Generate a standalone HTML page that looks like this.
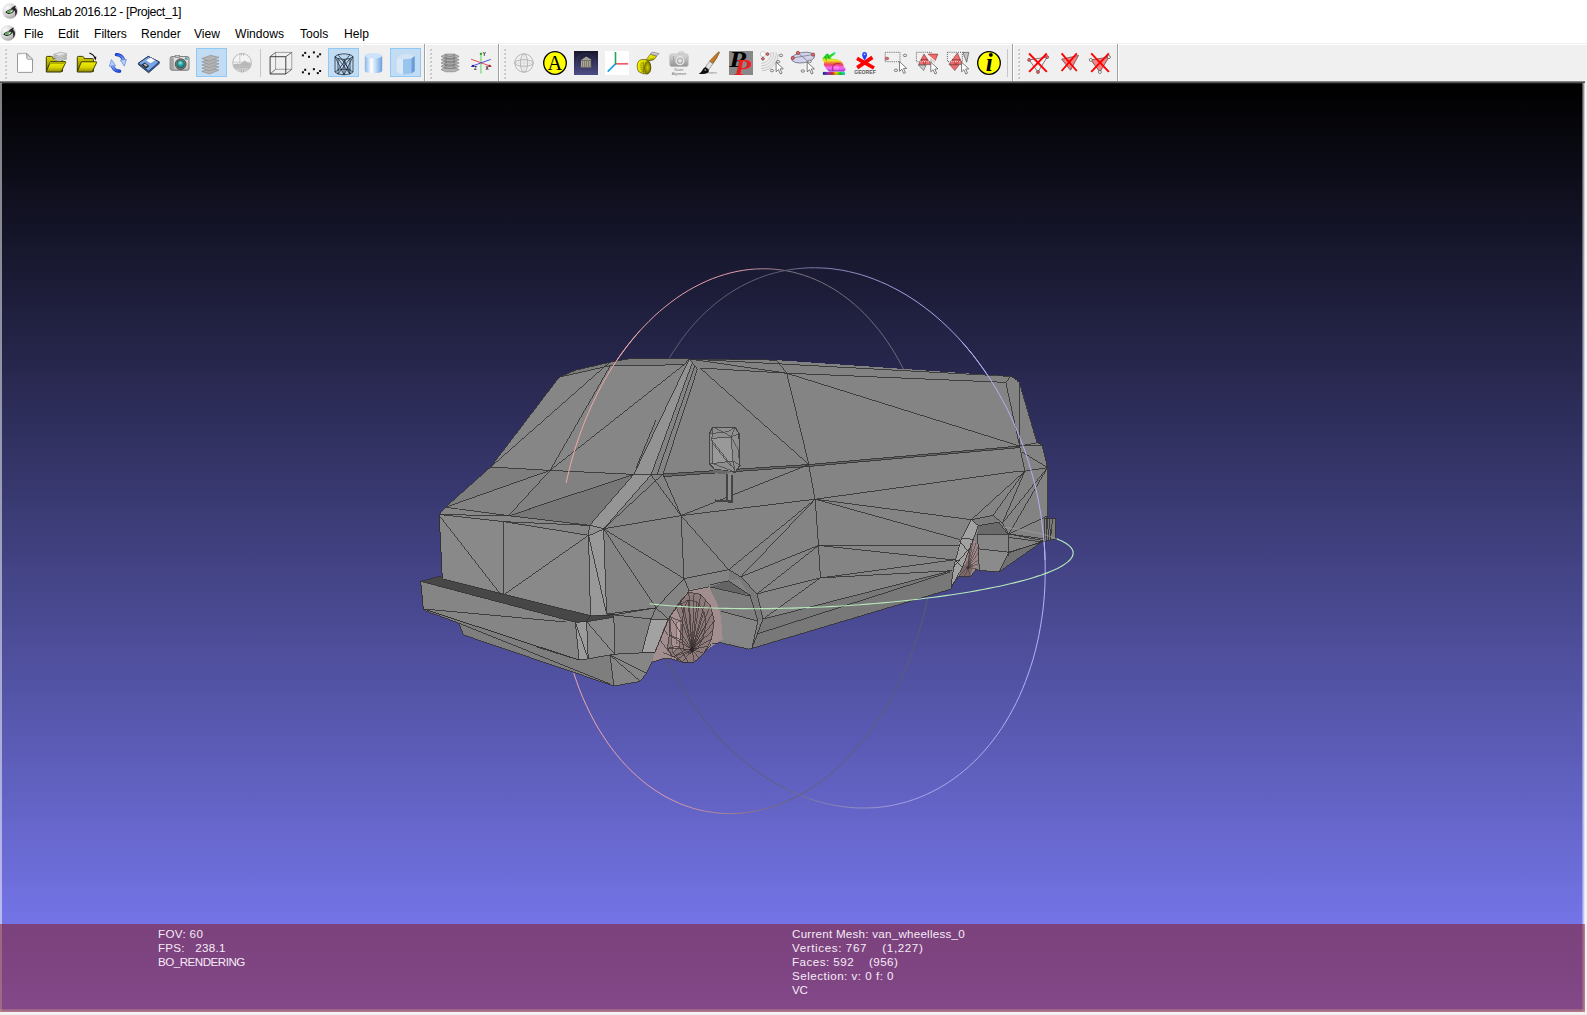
<!DOCTYPE html>
<html>
<head>
<meta charset="utf-8">
<title>MeshLab 2016.12 - [Project_1]</title>
<style>
html,body{margin:0;padding:0;}
body{width:1587px;height:1015px;overflow:hidden;background:#f0f0f0;font-family:"Liberation Sans",sans-serif;position:relative;}
#titlebar{position:absolute;left:0;top:0;width:1587px;height:24px;background:#fff;}
#title{position:absolute;left:23.1px;top:4.6px;font-size:12.4px;line-height:15px;color:#000;white-space:nowrap;letter-spacing:-0.40px;}
#menubar{position:absolute;left:0;top:24px;width:1587px;height:20px;background:#fff;}
.mi{position:absolute;top:2.5px;font-size:12.1px;line-height:15px;color:#000;white-space:nowrap;}
#toolbar{position:absolute;left:0;top:44px;width:1587px;height:37px;background:#f0f0f0;}
#tbtop{position:absolute;left:0;top:0;width:1587px;height:1px;background:#ffffff;}
#mbline{position:absolute;left:0;top:19px;width:1587px;height:1px;background:#f0f0f0;}
#view{position:absolute;left:0;top:81px;width:1585px;height:931px;background:#000;overflow:hidden;}
#grad{position:absolute;left:0;top:3px;width:1585px;height:928px;background:linear-gradient(to bottom,#000000 0%,#8080ff 100%);}
#topshade{position:absolute;left:0;top:0;width:1585px;height:3px;background:linear-gradient(to bottom,#a0a0a0,#000);}
#info{position:absolute;left:0;top:843px;width:1585px;height:88px;background:rgba(132,16,17,0.5);}
.it{position:absolute;font-size:11.6px;line-height:14px;color:#f6ecf6;white-space:pre;}
#lstrip{position:absolute;left:0;top:2px;width:2px;height:929px;background:rgba(255,255,255,0.5);}
#rstrip{position:absolute;left:1582px;top:2px;width:3px;height:929px;background:linear-gradient(to right,rgba(255,255,255,0.2),rgba(255,255,255,0.92));}
#bstrip{position:absolute;left:0;top:928px;width:1585px;height:3px;background:linear-gradient(to bottom,rgba(255,255,255,0.35),rgba(255,255,255,0.8));}
.eye{position:absolute;}
#edgeR{position:absolute;left:1585px;top:84px;width:1px;height:929px;background:#f6f6f6;}
#edgeB{position:absolute;left:0;top:1012px;width:1586px;height:1px;background:#f6f6f6;}
#scene{position:absolute;left:0;top:0;}
</style>
</head>
<body>
<div id="titlebar">
  <svg class="eye" style="left:2px;top:2.8px" width="16" height="16" viewBox="0 0 16 16"><defs><radialGradient id="eg1" cx="0.32" cy="0.3" r="0.8"><stop offset="0" stop-color="#fafafa"/><stop offset="0.55" stop-color="#d6d6d6"/><stop offset="1" stop-color="#9e9e9e"/></radialGradient></defs>
<circle cx="8" cy="8" r="7.7" fill="url(#eg1)"/>
<path d="M8.6 5.4Q11.4 3.6 13.4 2.4Q14.2 3.2 13 4.4Q15.2 6.6 15 9Q14.6 11.6 13.2 13.2Q13.8 10 12.6 7.6Q10.8 5.6 8.6 5.4Z" fill="#1a1a1a" opacity="0.92"/>
<path d="M3.4 9.2Q6.6 5 12.8 6.6Q11.2 10.8 6.6 10.9Q4.4 10.6 3.4 9.2Z" fill="#0e0e0e"/>
<path d="M4.6 9.1Q7.2 6.6 11.6 7.3Q10.4 9.9 6.8 10Q5.4 9.8 4.6 9.1Z" fill="#f4f4f4"/>
<ellipse cx="7.2" cy="8.6" rx="1.9" ry="1.3" fill="#62c462" transform="rotate(-8 7.2 8.6)"/><ellipse cx="7.0" cy="8.7" rx="0.8" ry="0.7" fill="#46a846"/>
</svg>
  <div id="title">MeshLab 2016.12 - [Project_1]</div>
</div>
<div id="menubar"><div id="mbline"></div>
<svg class="eye" style="left:0.2px;top:0.9px" width="16" height="16" viewBox="0 0 16 16"><defs><radialGradient id="eg2" cx="0.32" cy="0.3" r="0.8"><stop offset="0" stop-color="#fafafa"/><stop offset="0.55" stop-color="#d6d6d6"/><stop offset="1" stop-color="#9e9e9e"/></radialGradient></defs>
<circle cx="8" cy="8" r="7.7" fill="url(#eg2)"/>
<path d="M8.6 5.4Q11.4 3.6 13.4 2.4Q14.2 3.2 13 4.4Q15.2 6.6 15 9Q14.6 11.6 13.2 13.2Q13.8 10 12.6 7.6Q10.8 5.6 8.6 5.4Z" fill="#1a1a1a" opacity="0.92"/>
<path d="M3.4 9.2Q6.6 5 12.8 6.6Q11.2 10.8 6.6 10.9Q4.4 10.6 3.4 9.2Z" fill="#0e0e0e"/>
<path d="M4.6 9.1Q7.2 6.6 11.6 7.3Q10.4 9.9 6.8 10Q5.4 9.8 4.6 9.1Z" fill="#f4f4f4"/>
<ellipse cx="7.2" cy="8.6" rx="1.9" ry="1.3" fill="#62c462" transform="rotate(-8 7.2 8.6)"/><ellipse cx="7.0" cy="8.7" rx="0.8" ry="0.7" fill="#46a846"/>
</svg>
  <span class="mi" style="left:24px">File</span>
  <span class="mi" style="left:58px">Edit</span>
  <span class="mi" style="left:94px">Filters</span>
  <span class="mi" style="left:141px">Render</span>
  <span class="mi" style="left:194px">View</span>
  <span class="mi" style="left:235px">Windows</span>
  <span class="mi" style="left:300px">Tools</span>
  <span class="mi" style="left:344px">Help</span>
</div>
<div id="toolbar"><div id="tbtop"></div>
<style>
.ic{position:absolute;top:7px;overflow:visible}
.chk{position:absolute;top:4px;width:29px;height:27px;background:#c2dcf3;border:1px solid #90c8f6;}
.hd{position:absolute;top:4px;width:2px;height:30px;background:repeating-linear-gradient(to bottom,#c6c6c6 0px,#a2a2a2 2px,#f0f0f0 2px,#f0f0f0 4px);box-shadow:-1px -1px 0 #f8f8f8;}
.tsep{position:absolute;top:0px;width:1px;height:37px;background:#a0a0a0;box-shadow:1px 0 0 #fff;}
.sep{position:absolute;top:5px;width:1px;height:28px;background:#c6c6c6;}
</style>
<svg style="position:absolute;left:4px;top:0" width="4" height="37" viewBox="0 0 4 37"><path d="M0 5.4L2.4 3V5.4Z" fill="#fbfbfb"/><path d="M0.6 6.6L2.6 4.4V6.6Z" fill="#9a9a9a"/><path d="M0 9.4L2.4 7V9.4Z" fill="#fbfbfb"/><path d="M0.6 10.6L2.6 8.4V10.6Z" fill="#9a9a9a"/><path d="M0 13.4L2.4 11V13.4Z" fill="#fbfbfb"/><path d="M0.6 14.6L2.6 12.4V14.6Z" fill="#9a9a9a"/><path d="M0 17.4L2.4 15V17.4Z" fill="#fbfbfb"/><path d="M0.6 18.6L2.6 16.4V18.6Z" fill="#9a9a9a"/><path d="M0 21.4L2.4 19V21.4Z" fill="#fbfbfb"/><path d="M0.6 22.6L2.6 20.4V22.6Z" fill="#9a9a9a"/><path d="M0 25.4L2.4 23V25.4Z" fill="#fbfbfb"/><path d="M0.6 26.6L2.6 24.4V26.6Z" fill="#9a9a9a"/><path d="M0 29.4L2.4 27V29.4Z" fill="#fbfbfb"/><path d="M0.6 30.6L2.6 28.4V30.6Z" fill="#9a9a9a"/><path d="M0 33.4L2.4 31V33.4Z" fill="#fbfbfb"/><path d="M0.6 34.6L2.6 32.4V34.6Z" fill="#9a9a9a"/></svg>
<svg class="ic" style="left:13px" width="24" height="24" viewBox="0 0 24 24"><defs><linearGradient id="nf" x1="0" y1="0" x2="1" y2="1"><stop offset="0" stop-color="#bdbdbd"/><stop offset="1" stop-color="#fdfdfd"/></linearGradient></defs><path d="M4.5 3.2Q4.5 2.4 5.3 2.4H13.6L19.5 8.3V20.6Q19.5 21.4 18.7 21.4H5.3Q4.5 21.4 4.5 20.6Z" fill="#fff" stroke="#8c8c8c" stroke-width="0.9"/>
<path d="M13.6 2.4L19.5 8.3H15.2Q13.9 8.3 13.8 7Z" fill="url(#nf)" stroke="#8c8c8c" stroke-width="0.8" stroke-linejoin="round"/>
<path d="M5 3.4Q8 2.6 13 3" stroke="#d8d8d8" stroke-width="0.8" fill="none"/></svg>
<svg class="ic" style="left:44px" width="24" height="24" viewBox="0 0 24 24"><defs><linearGradient id="fy" x1="0" y1="0" x2="0" y2="1"><stop offset="0" stop-color="#f4f000"/><stop offset="0.55" stop-color="#d8d400"/><stop offset="1" stop-color="#8a8600"/></linearGradient><linearGradient id="fb" x1="0" y1="0" x2="0" y2="1"><stop offset="0" stop-color="#e0dc00"/><stop offset="1" stop-color="#6c6800"/></linearGradient></defs><path d="M2.3 6.3Q2.3 5.4 3.2 5.4H7.6Q8.4 5.4 8.7 6.2L9.2 7.6H17.6Q18.4 7.6 18.4 8.4V20.6H2.3Z" fill="url(#fb)" stroke="#2e2c00" stroke-width="0.9" stroke-linejoin="round"/>
<path d="M6.4 10.8H21.3Q21.9 10.8 21.6 11.5L17.4 20.4Q17.1 21 16.4 21H2.6Q2.1 21 2.4 20.4Z" fill="url(#fy)" stroke="#2e2c00" stroke-width="0.9" stroke-linejoin="round"/><g stroke="#8a8a8a" stroke-width="0.5" fill="#d6d6d6">
<path d="M9.3 8.6L16.5 6.2L23 7.8L15.6 10.4Z"/><path d="M9.3 6.9L16.5 4.5L23 6.1L15.6 8.7Z"/><path d="M9.3 5.2L16.5 2.8L23 4.4L15.6 7Z"/><path d="M9.3 3.5L16.5 1.1L23 2.7L15.6 5.3Z" fill="#e4e4e4"/></g>
<path d="M6.4 10.8H21.3Q21.9 10.8 21.6 11.5L20.9 13H5.4Z" fill="url(#fy)" stroke="none"/><path d="M6.4 10.8H21.3Q21.9 10.8 21.6 11.5" fill="none" stroke="#2e2c00" stroke-width="0.9"/></svg>
<svg class="ic" style="left:75px" width="24" height="24" viewBox="0 0 24 24"><defs><linearGradient id="fy" x1="0" y1="0" x2="0" y2="1"><stop offset="0" stop-color="#f4f000"/><stop offset="0.55" stop-color="#d8d400"/><stop offset="1" stop-color="#8a8600"/></linearGradient><linearGradient id="fb" x1="0" y1="0" x2="0" y2="1"><stop offset="0" stop-color="#e0dc00"/><stop offset="1" stop-color="#6c6800"/></linearGradient></defs><path d="M2.3 6.3Q2.3 5.4 3.2 5.4H7.6Q8.4 5.4 8.7 6.2L9.2 7.6H17.6Q18.4 7.6 18.4 8.4V20.6H2.3Z" fill="url(#fb)" stroke="#2e2c00" stroke-width="0.9" stroke-linejoin="round"/>
<path d="M6.4 10.8H21.3Q21.9 10.8 21.6 11.5L17.4 20.4Q17.1 21 16.4 21H2.6Q2.1 21 2.4 20.4Z" fill="url(#fy)" stroke="#2e2c00" stroke-width="0.9" stroke-linejoin="round"/><path d="M14.4 1.9Q19 3.6 20.2 7.4" fill="none" stroke="#111" stroke-width="1.1"/><path d="M18.6 6.2L21.3 5.6L20.9 9.4Z" fill="#111"/></svg>
<svg class="ic" style="left:106px" width="24" height="24" viewBox="0 0 24 24"><defs><linearGradient id="ra" x1="0" y1="0" x2="1" y2="1"><stop offset="0" stop-color="#1c4ce0"/><stop offset="1" stop-color="#86aef4"/></linearGradient><linearGradient id="rb" x1="1" y1="1" x2="0" y2="0"><stop offset="0" stop-color="#1c4ce0"/><stop offset="1" stop-color="#86aef4"/></linearGradient></defs><path d="M10.4 3.6Q16 3.8 17.8 9.4" fill="none" stroke="#0c2ca8" stroke-width="3.3" stroke-linecap="round"/><path d="M10.4 3.6Q16 3.8 17.8 9.4" fill="none" stroke="url(#ra)" stroke-width="2.1" stroke-linecap="round"/>
<path d="M14.4 9.2L20.4 8.4L18.4 15.2Z" fill="#b4d0fa" stroke="#5c84d8" stroke-width="0.7" stroke-linejoin="round"/>
<path d="M13.6 20.2Q8 20 6.2 14.4" fill="none" stroke="#0c2ca8" stroke-width="3.3" stroke-linecap="round"/><path d="M13.6 20.2Q8 20 6.2 14.4" fill="none" stroke="url(#rb)" stroke-width="2.1" stroke-linecap="round"/>
<path d="M9.6 14.6L3.4 15.4L5.4 8.6Z" fill="#b4d0fa" stroke="#5c84d8" stroke-width="0.7" stroke-linejoin="round"/></svg>
<svg class="ic" style="left:137px" width="24" height="24" viewBox="0 0 24 24"><path d="M1.4 12.2L11.2 5.4L22.2 10.9V12.6L11.6 21.8L1.4 13.6Z" fill="#3c66a8" stroke="#1c2c48" stroke-width="0.8" stroke-linejoin="round"/>
<path d="M1.4 12.2L11.2 5.4L22.2 10.9L11.6 20.2Z" fill="#78a8ea" stroke="#1c2c48" stroke-width="0.8" stroke-linejoin="round"/>
<path d="M8.6 9.2L13.6 6.4L18.6 9.6L13.4 12.6Z" fill="#fff" stroke="#5a7cb0" stroke-width="0.4"/>
<path d="M4.4 13.6L8 11.6L12.2 15L8.8 17.8Z" fill="#2a2a2a"/>
<path d="M6.4 13.6L8.2 12.6L10.6 14.6L8.9 15.8Z" fill="#b8b8b8"/></svg>
<svg class="ic" style="left:168px" width="24" height="24" viewBox="0 0 24 24"><defs><linearGradient id="cb" x1="0" y1="0" x2="0" y2="1"><stop offset="0" stop-color="#ececec"/><stop offset="1" stop-color="#bcbcbc"/></linearGradient><radialGradient id="cl" cx="0.45" cy="0.35" r="0.7"><stop offset="0" stop-color="#9ce4e0"/><stop offset="0.5" stop-color="#1ea6a2"/><stop offset="1" stop-color="#0a6a68"/></radialGradient></defs><rect x="2.2" y="5.6" width="18.8" height="13.6" rx="1.6" fill="url(#cb)" stroke="#5a5a5a" stroke-width="0.8"/>
<rect x="2.6" y="6.2" width="3.2" height="12.6" rx="1" fill="#a2a2a2"/>
<rect x="7.2" y="4.6" width="4.6" height="1.8" fill="#c4c4c4" stroke="#6e6e6e" stroke-width="0.6"/>
<rect x="17" y="6.8" width="2.8" height="1.6" fill="#38b4b4" stroke="#6e6e6e" stroke-width="0.4"/>
<circle cx="12.7" cy="13.1" r="5.4" fill="#7a7a7a" stroke="#3c3c3c" stroke-width="0.7"/>
<circle cx="12.7" cy="13.1" r="3.8" fill="url(#cl)" stroke="#3a4a4a" stroke-width="0.5"/></svg>
<div class="chk" style="left:196px"></div>
<svg class="ic" style="left:199px" width="24" height="24" viewBox="0 0 24 24"><g fill="#b4b4b4" stroke="#848484" stroke-width="0.55" stroke-linejoin="round"><path d="M2.8 20.4L11.6 17.1L20 19.1L10.4 23.0Z"/><path d="M2.8 17.2L11.6 13.9L20 15.9L10.4 19.8Z"/><path d="M2.8 14.0L11.6 10.7L20 12.7L10.4 16.6Z"/><path d="M2.8 10.8L11.6 7.5L20 9.5L10.4 13.4Z"/><path d="M2.8 7.6L11.6 4.3L20 6.3L10.4 10.2Z"/></g></svg>
<svg class="ic" style="left:230px" width="24" height="24" viewBox="0 0 24 24"><circle cx="12.1" cy="11.8" r="9.3" fill="#f4f4f4" stroke="#b4b4b4" stroke-width="0.9"/>
<path d="M3.2 13.6L7.4 12.4L9.8 13.2L14.6 9.6L17.6 11.6L21 12.6Q21.2 16 19.4 17.8H4.6Q3.2 15.8 3.2 13.6Z" fill="#b8b8b8"/>
<path d="M4.6 17.8H19.4Q17.6 20 14.8 20.8H9.2Q6.2 20 4.6 17.8Z" fill="#d4d4d4"/>
<path d="M9.8 2.8V21M3 11.2H21.2M4 15.6H20.4M5.6 18.6H18.8" stroke="#c2c2c2" stroke-width="0.7" fill="none"/>
<path d="M11.4 2.6V4.6M13.6 2.8V4.6M11.4 19.2V21M13.6 19V20.8" stroke="#8a8a8a" stroke-width="0.6"/></svg>
<div class="sep" style="left:260px"></div>
<svg class="ic" style="left:269px" width="24" height="24" viewBox="0 0 24 24"><path d="M6.6 1.4H22.8V18.3H6.6Z" fill="none" stroke="#8a8a8a" stroke-width="0.8"/>
<path d="M1.1 5.7L6.6 1.4M16.8 5.7L22.8 1.4M16.8 23L22.8 18.3M1.1 23L6.6 18.3" stroke="#4a4a4a" stroke-width="0.8"/>
<path d="M1.1 5.7H16.8V23H1.1Z" fill="none" stroke="#2e2e2e" stroke-width="0.9"/></svg>
<svg class="ic" style="left:300px" width="24" height="24" viewBox="0 0 24 24"><rect x="1.9" y="3.4" width="2" height="2" fill="#0a0a0a"/><rect x="4.2" y="0.9" width="2" height="2" fill="#0a0a0a"/><rect x="8.0" y="4.8" width="2" height="2" fill="#0a0a0a"/><rect x="12.9" y="0.4" width="2" height="2" fill="#0a0a0a"/><rect x="16.8" y="4.5" width="2" height="2" fill="#0a0a0a"/><rect x="19.1" y="2.3" width="2" height="2" fill="#0a0a0a"/><rect x="1.9" y="20.3" width="2" height="2" fill="#0a0a0a"/><rect x="4.2" y="17.8" width="2" height="2" fill="#0a0a0a"/><rect x="8.0" y="21.7" width="2" height="2" fill="#0a0a0a"/><rect x="12.9" y="17.2" width="2" height="2" fill="#0a0a0a"/><rect x="16.8" y="21.1" width="2" height="2" fill="#0a0a0a"/><rect x="19.1" y="19.0" width="2" height="2" fill="#0a0a0a"/></svg>
<div class="chk" style="left:328px"></div>
<svg class="ic" style="left:331px" width="24" height="24" viewBox="0 0 24 24"><path d="M4 5.6V21Q4 23.6 13 23.8Q22 23.6 22 21V5.6Q22 3 13 2.8Q4 3 4 5.6Z" fill="#b4d2ee" fill-opacity="0.55"/>
<g fill="none" stroke="#0e1822" stroke-width="0.68" stroke-linejoin="round">
<path d="M4 5.6L7 3.6L13 2.8L19 3.6L22 5.6L19 7.6L13 8.4L7 7.6Z"/>
<path d="M4 21L7 19L13 18.2L19 19L22 21L19 23L13 23.8L7 23Z"/>
<path d="M4 5.6V21M22 5.6V21M7 7.6V23M19 7.6V23M13 8.4V23.8"/>
<path d="M4 5.6L13 23.8M13 8.4L19 23M7 7.6L19 23M19 7.6L7 23M22 5.6L13 23.8M7 3.6L19 19M19 3.6L7 19"/></g></svg>
<svg class="ic" style="left:362px" width="24" height="24" viewBox="0 0 24 24"><defs><linearGradient id="sg" x1="0" y1="0" x2="1" y2="0"><stop offset="0" stop-color="#86b6ea"/><stop offset="0.38" stop-color="#ffffff"/><stop offset="0.78" stop-color="#9cc4ee"/><stop offset="1" stop-color="#6a9edc"/></linearGradient></defs><path d="M2.8 4.8V19.4Q2.8 22 11.5 22.1Q20.2 22 20.2 19.4V4.8Z" fill="url(#sg)"/>
<ellipse cx="11.5" cy="4.8" rx="8.7" ry="2.8" fill="#cfe3f8"/></svg>
<div class="chk" style="left:390px"></div>
<svg class="ic" style="left:393px" width="24" height="24" viewBox="0 0 24 24"><path d="M3.7 7L8 3.6L16 2.8L21.8 5L18.4 7.6L10 8.6Z" fill="#d2e3f5"/>
<path d="M3.7 7L10 8.6V23.6L3.7 21Z" fill="#dce8f6"/>
<path d="M10 8.6L18.4 7.6V22.6L10 23.6Z" fill="#98c4f0"/>
<path d="M18.4 7.6L21.8 5V20L18.4 22.6Z" fill="#6a9cd8"/></svg>
<div class="tsep" style="left:424px"></div>
<svg style="position:absolute;left:429px;top:0" width="4" height="37" viewBox="0 0 4 37"><path d="M0 5.4L2.4 3V5.4Z" fill="#fbfbfb"/><path d="M0.6 6.6L2.6 4.4V6.6Z" fill="#9a9a9a"/><path d="M0 9.4L2.4 7V9.4Z" fill="#fbfbfb"/><path d="M0.6 10.6L2.6 8.4V10.6Z" fill="#9a9a9a"/><path d="M0 13.4L2.4 11V13.4Z" fill="#fbfbfb"/><path d="M0.6 14.6L2.6 12.4V14.6Z" fill="#9a9a9a"/><path d="M0 17.4L2.4 15V17.4Z" fill="#fbfbfb"/><path d="M0.6 18.6L2.6 16.4V18.6Z" fill="#9a9a9a"/><path d="M0 21.4L2.4 19V21.4Z" fill="#fbfbfb"/><path d="M0.6 22.6L2.6 20.4V22.6Z" fill="#9a9a9a"/><path d="M0 25.4L2.4 23V25.4Z" fill="#fbfbfb"/><path d="M0.6 26.6L2.6 24.4V26.6Z" fill="#9a9a9a"/><path d="M0 29.4L2.4 27V29.4Z" fill="#fbfbfb"/><path d="M0.6 30.6L2.6 28.4V30.6Z" fill="#9a9a9a"/><path d="M0 33.4L2.4 31V33.4Z" fill="#fbfbfb"/><path d="M0.6 34.6L2.6 32.4V34.6Z" fill="#9a9a9a"/></svg>
<svg class="ic" style="left:438px" width="24" height="24" viewBox="0 0 24 24"><g fill="#b2b2b2" stroke="#767676" stroke-width="0.55" stroke-linejoin="round"><path d="M3 18.6L7.6 16.2L16.6 16.2L21.2 18.6L16.6 20.8L7.6 20.8Z"/><path d="M3 15.3L7.6 12.9L16.6 12.9L21.2 15.3L16.6 17.5L7.6 17.5Z"/><path d="M3 12.0L7.6 9.6L16.6 9.6L21.2 12.0L16.6 14.2L7.6 14.2Z"/><path d="M3 8.7L7.6 6.3L16.6 6.3L21.2 8.7L16.6 10.9L7.6 10.9Z"/><path d="M3 5.4L7.6 3.0L16.6 3.0L21.2 5.4L16.6 7.6L7.6 7.6Z"/></g><g fill="none" stroke="#6a6a6a" stroke-width="0.5"><path d="M7 4.4Q12 6.8 17 4.4M6 6.2Q12 9 18 6.2M7 7.7Q12 10.1 17 7.7M6 9.5Q12 12.3 18 9.5M7 11Q12 13.4 17 11M6 12.8Q12 15.6 18 12.8M7 14.3Q12 16.7 17 14.3M6 16.1Q12 18.9 18 16.1M8 3.2V17M16 3.2V17"/></g></svg>
<svg class="ic" style="left:469px" width="24" height="24" viewBox="0 0 24 24"><path d="M11.9 2V22.6" stroke="#9fdf9f" stroke-width="1.9"/><rect x="10.9" y="1.8" width="2" height="2" fill="#12a812"/>
<path d="M2 8.2L22.2 15.4" stroke="#e63c3c" stroke-width="0.9"/><path d="M22.6 15.6L19.4 15.9L20.4 13.4Z" fill="#b00000"/>
<path d="M21.8 8.4L2.4 15.4" stroke="#4040e4" stroke-width="0.9"/><path d="M2 15.6L5.2 15.9L4.2 13.4Z" fill="#0000b0"/>
<g font-family="Liberation Sans,sans-serif" font-weight="bold" font-size="4.6" fill="#111"><text x="13.8" y="5.2">Y</text><text x="5" y="19.4">Z</text><text x="16.6" y="19.4">X</text></g></svg>
<div class="tsep" style="left:498px"></div>
<svg style="position:absolute;left:503px;top:0" width="4" height="37" viewBox="0 0 4 37"><path d="M0 5.4L2.4 3V5.4Z" fill="#fbfbfb"/><path d="M0.6 6.6L2.6 4.4V6.6Z" fill="#9a9a9a"/><path d="M0 9.4L2.4 7V9.4Z" fill="#fbfbfb"/><path d="M0.6 10.6L2.6 8.4V10.6Z" fill="#9a9a9a"/><path d="M0 13.4L2.4 11V13.4Z" fill="#fbfbfb"/><path d="M0.6 14.6L2.6 12.4V14.6Z" fill="#9a9a9a"/><path d="M0 17.4L2.4 15V17.4Z" fill="#fbfbfb"/><path d="M0.6 18.6L2.6 16.4V18.6Z" fill="#9a9a9a"/><path d="M0 21.4L2.4 19V21.4Z" fill="#fbfbfb"/><path d="M0.6 22.6L2.6 20.4V22.6Z" fill="#9a9a9a"/><path d="M0 25.4L2.4 23V25.4Z" fill="#fbfbfb"/><path d="M0.6 26.6L2.6 24.4V26.6Z" fill="#9a9a9a"/><path d="M0 29.4L2.4 27V29.4Z" fill="#fbfbfb"/><path d="M0.6 30.6L2.6 28.4V30.6Z" fill="#9a9a9a"/><path d="M0 33.4L2.4 31V33.4Z" fill="#fbfbfb"/><path d="M0.6 34.6L2.6 32.4V34.6Z" fill="#9a9a9a"/></svg>
<svg class="ic" style="left:512px" width="24" height="24" viewBox="0 0 24 24"><g fill="none" stroke="#aeaeae" stroke-width="0.9"><circle cx="12" cy="12" r="9.2"/><ellipse cx="12" cy="12" rx="3.5" ry="9.2"/><ellipse cx="12" cy="12" rx="9.2" ry="3.3"/><path d="M12 2.8V21.2M2.8 12H21.2" stroke="#cfcfcf" stroke-width="0.6"/></g></svg>
<svg class="ic" style="left:543px" width="24" height="24" viewBox="0 0 24 24"><circle cx="12" cy="12" r="11.3" fill="#ffff00" stroke="#000" stroke-width="1.3"/><text x="12" y="19" text-anchor="middle" font-family="Liberation Serif,serif" font-size="20.5" fill="#000">A</text></svg>
<svg class="ic" style="left:574px" width="24" height="24" viewBox="0 0 24 24"><defs><linearGradient id="mg" x1="0" y1="0" x2="0" y2="1"><stop offset="0" stop-color="#17152c"/><stop offset="1" stop-color="#4e4e88"/></linearGradient></defs><rect x="0" y="0" width="24" height="24" fill="url(#mg)"/><circle cx="12" cy="12" r="9.5" fill="none" stroke="#5a5a8c" stroke-width="0.4" opacity="0.6"/>
<path d="M6.8 9.2L12.2 5.6L17.2 8.4V9.6H6.8Z" fill="#a49f90"/><rect x="6.9" y="9.6" width="10.2" height="6.4" fill="#7c786e"/>
<path d="M7.6 9.8V16M9.6 9.8V16M11.6 9.8V16M13.6 9.8V16M15.8 9.8V16" stroke="#b2ad9c" stroke-width="1.0"/><rect x="6.6" y="15.6" width="10.8" height="0.9" fill="#8e8a7a"/></svg>
<svg class="ic" style="left:605px" width="24" height="24" viewBox="0 0 24 24"><rect x="0" y="0" width="24" height="24" fill="#fff"/><path d="M10.5 12.8L2.7 20.7" stroke="#18a2ea" stroke-width="1.7"/><path d="M10.5 12.8H23.2" stroke="#f25a66" stroke-width="1.7"/><path d="M10.5 1V13.6" stroke="#22a45c" stroke-width="1.6"/></svg>
<svg class="ic" style="left:636px" width="24" height="24" viewBox="0 0 24 24"><defs><linearGradient id="tg" x1="0" y1="0" x2="1" y2="0.4"><stop offset="0" stop-color="#fcf800"/><stop offset="0.5" stop-color="#e2de00"/><stop offset="1" stop-color="#8c8800"/></linearGradient><radialGradient id="ts" cx="0.5" cy="0.5" r="0.6"><stop offset="0" stop-color="#d2ce00"/><stop offset="1" stop-color="#6a6600"/></radialGradient><linearGradient id="tt" x1="0" y1="0" x2="0.3" y2="1"><stop offset="0" stop-color="#fcf800"/><stop offset="0.6" stop-color="#e0dc00"/><stop offset="1" stop-color="#6a6600"/></linearGradient></defs><path d="M9.6 9Q11.6 7.2 12.6 5.4L14.3 3.2L20.6 5Q19.2 7.6 17.9 8.6Q15 9.8 11.4 10.4Z" fill="url(#tt)" stroke="#3a3800" stroke-width="0.5" stroke-linejoin="round"/>
<path d="M14.3 3.2L16.1 1.1L22.9 2.6L20.6 5Z" fill="#e4e4e4" stroke="#5a5a5a" stroke-width="0.6" stroke-linejoin="round"/><path d="M15.4 2.6L21.6 4" stroke="#8a8a8a" stroke-width="0.5"/>
<path d="M1.2 15Q1.2 9.2 6 8.5Q10 8 12.2 9.8Q15 12 14.9 17Q14.6 22 11.4 23Q6 23.4 2.6 20.6Q1.2 18.6 1.2 15Z" fill="url(#tg)" stroke="#3a3800" stroke-width="0.6"/>
<ellipse cx="11.5" cy="16.6" rx="3.1" ry="6.1" fill="url(#ts)" stroke="#4a4800" stroke-width="0.4"/>
<path d="M4.6 12.2L7 11.8M3.8 14.2L6.6 14M4.2 16.2L7 16.2M4.6 18.2L7.2 18.4M5.6 20.2L7.6 20.6M7.6 10.8V22" stroke="#5a5600" stroke-width="0.6" fill="none"/></svg>
<svg class="ic" style="left:667px" width="24" height="24" viewBox="0 0 24 24"><defs><linearGradient id="rg" x1="0" y1="0" x2="0" y2="1"><stop offset="0" stop-color="#dcdcdc"/><stop offset="1" stop-color="#929292"/></linearGradient></defs><rect x="11.6" y="0.8" width="5.2" height="3" rx="0.8" fill="#dcdcdc" stroke="#b4b4b4" stroke-width="0.5"/>
<rect x="2.8" y="3" width="18.4" height="12.6" rx="2" fill="url(#rg)" stroke="#b0b0b0" stroke-width="0.6"/>
<path d="M6.5 5V14" stroke="#9a9a9a" stroke-width="0.7"/><circle cx="13" cy="9.8" r="3.9" fill="#b4b4b4" stroke="#ececec" stroke-width="1.1"/><circle cx="13" cy="9.8" r="1.8" fill="#e6e6e6"/>
<g font-family="Liberation Sans,sans-serif" font-size="3.7" fill="#6e6e6e" text-anchor="middle"><text x="12" y="19.5" textLength="9" lengthAdjust="spacingAndGlyphs">Raster</text><text x="12" y="23.5" textLength="14.6" lengthAdjust="spacingAndGlyphs">Alignment</text></g></svg>
<svg class="ic" style="left:698px" width="24" height="24" viewBox="0 0 24 24"><defs><linearGradient id="bh" x1="0" y1="0" x2="1" y2="1"><stop offset="0" stop-color="#e89a38"/><stop offset="1" stop-color="#a85c0c"/></linearGradient></defs><ellipse cx="14" cy="21.8" rx="5.4" ry="0.9" fill="#8c8c8c" opacity="0.55"/>
<path d="M20.8 0.8Q16 5 11.6 10.2L14.8 12.8Q19.4 6.8 21.5 1.3Z" fill="url(#bh)" stroke="#5a3408" stroke-width="0.6" stroke-linejoin="round"/>
<path d="M11.6 10.2L7.4 16L10.8 18.8L14.8 12.8Z" fill="#e2e2e2" stroke="#6e6e6e" stroke-width="0.6"/>
<path d="M7.4 16Q5 17.2 4.2 19.6Q3.2 21.6 0.8 22.7Q6.6 23.6 9.8 21.8Q11.2 20.6 10.8 18.8Z" fill="#0c0c0c"/><circle cx="7.4" cy="19" r="1" fill="#8a8a8a"/></svg>
<svg class="ic" style="left:729px" width="24" height="24" viewBox="0 0 24 24"><rect x="0" y="0" width="24" height="24" fill="#888888"/><g font-family="Liberation Serif,serif" font-weight="bold" font-style="italic" font-size="23.4"><text transform="translate(0.2 15.8) scale(1.17 1)" fill="#000">P</text><text transform="translate(5.3 23.8) scale(1.17 1)" fill="#ee1c1c">P</text></g></svg>
<svg class="ic" style="left:760px" width="24" height="24" viewBox="0 0 24 24"><g fill="none" stroke="#b4b4b4" stroke-width="0.7"><path d="M11 1.2A10 10 0 0 1 1.4 12.4"/><path d="M13.6 1.2A12.6 12.6 0 0 1 1.2 15"/><path d="M16.2 1.4A15.4 15.4 0 0 1 1.2 17.6"/><path d="M18.4 3A17.6 17.6 0 0 1 2 19.8"/></g>
<circle cx="2.9" cy="3.2" r="2.6" fill="#fff" stroke="#b0b0b0" stroke-width="0.6"/><circle cx="7.5" cy="3.1" r="1.4" fill="#f26464" stroke="#6a2a2a" stroke-width="0.6"/><circle cx="2.9" cy="7.8" r="1.4" fill="#f26464" stroke="#6a2a2a" stroke-width="0.6"/><ellipse cx="21.0" cy="4.4" rx="1.7" ry="1.25" fill="#e8e8e8" stroke="#5a5a5a" stroke-width="0.7"/><ellipse cx="18.1" cy="10.7" rx="1.7" ry="1.25" fill="#e8e8e8" stroke="#5a5a5a" stroke-width="0.7"/><ellipse cx="11.9" cy="19.6" rx="1.7" ry="1.25" fill="#e8e8e8" stroke="#5a5a5a" stroke-width="0.7"/><path d="M16.1 11.1v9.6l2.3-2.1l1.9 4.3l1.7-0.8l-1.9-4.2l3.2-0.1Z" fill="#fff" stroke="#4a4a4a" stroke-width="0.7" stroke-linejoin="round"/></svg>
<svg class="ic" style="left:791px" width="24" height="24" viewBox="0 0 24 24"><ellipse cx="12" cy="6.6" rx="11.6" ry="5.2" transform="rotate(-8 12 6.6)" fill="#d2d2ea" stroke="#5c5c74" stroke-width="0.7"/>
<path d="M1.8 6.9L22.1 3.6M6.9 1.9L17 10.4" stroke="#5c5c74" stroke-width="0.6"/><circle cx="6.9" cy="1.9" r="1.6" fill="#f26464" stroke="#6a2a2a" stroke-width="0.6"/><circle cx="22.1" cy="3.6" r="1.6" fill="#f26464" stroke="#6a2a2a" stroke-width="0.6"/><circle cx="1.8" cy="6.9" r="1.6" fill="#f26464" stroke="#6a2a2a" stroke-width="0.6"/><ellipse cx="18.7" cy="10.3" rx="1.7" ry="1.25" fill="#e8e8e8" stroke="#5a5a5a" stroke-width="0.7"/><ellipse cx="11.8" cy="20.0" rx="1.7" ry="1.25" fill="#e8e8e8" stroke="#5a5a5a" stroke-width="0.7"/><path d="M16.2 11.2v9.6l2.3-2.1l1.9 4.3l1.7-0.8l-1.9-4.2l3.2-0.1Z" fill="#fff" stroke="#4a4a4a" stroke-width="0.7" stroke-linejoin="round"/></svg>
<svg class="ic" style="left:822px" width="24" height="24" viewBox="0 0 24 24"><defs><linearGradient id="bb" x1="0" y1="0" x2="1" y2="0"><stop offset="0" stop-color="#1030a8"/><stop offset="0.25" stop-color="#a830c8"/><stop offset="0.42" stop-color="#e42020"/><stop offset="0.6" stop-color="#f0e000"/><stop offset="0.78" stop-color="#20d420"/><stop offset="0.96" stop-color="#00f0c4"/></linearGradient><linearGradient id="bn" gradientUnits="userSpaceOnUse" x1="0" y1="1" x2="0" y2="20.4"><stop offset="0" stop-color="#20f0e8"/><stop offset="0.12" stop-color="#20e030"/><stop offset="0.3" stop-color="#38d818"/><stop offset="0.42" stop-color="#f4f030"/><stop offset="0.56" stop-color="#f08030"/><stop offset="0.66" stop-color="#ee4070"/><stop offset="0.8" stop-color="#f468ee"/><stop offset="0.93" stop-color="#d050e8"/><stop offset="1" stop-color="#7828b8"/></linearGradient></defs><rect x="0.9" y="20.9" width="22" height="2.9" fill="url(#bb)"/><rect x="0.9" y="22.6" width="22" height="1.2" fill="#000" opacity="0.28"/>
<path d="M12.9 1Q14 1.6 13.2 3L8.6 6.6Q9 7.6 10 8Q13 7.6 15.1 8.2Q18.6 9 20.1 11.2Q21.6 13.4 21.7 15.9Q23.4 16.6 23.6 17.9Q23.6 19.4 22 20.4L7 20.4Q4.4 18.6 3.4 16.6Q2 14.6 1.9 13.4Q1.8 11.8 2.4 10.8L0.6 10Q-0.2 9.2 0.4 8.2Q1.4 5.4 3 4.4Q4 2.6 5.4 2.4Q6.6 2.6 7.1 4.6L11.4 1.4Q12.2 0.8 12.9 1Z" fill="url(#bn)"/>
<path d="M10.6 19.8Q9.4 15.4 12.2 13.2Q15 11.6 18.6 12.8" stroke="#8a1030" stroke-width="0.8" fill="none" opacity="0.75"/>
<path d="M5.2 2.8Q6.6 5 7.2 7.6M3.2 5.2Q4.6 7.6 4.2 10" stroke="#0a6a0a" stroke-width="0.7" fill="none" opacity="0.7"/>
<ellipse cx="14.6" cy="16.6" rx="2.6" ry="2.2" fill="#fa90fa" opacity="0.6"/></svg>
<svg class="ic" style="left:853px" width="24" height="24" viewBox="0 0 24 24"><path d="M4 7.4L21 17M19.4 6.4L4.2 16.6" stroke="#ff0000" stroke-width="3.7"/>
<path d="M11.6 9.4Q9 5.4 9.2 3.4A2.4 2.4 0 0 1 14 3.4Q14.2 5.4 11.6 9.4Z" fill="#2040ff"/><circle cx="11.6" cy="3.3" r="0.9" fill="#c8d4ff"/>
<text x="12" y="23.2" text-anchor="middle" font-family="Liberation Sans,sans-serif" font-size="5.6" font-weight="bold" fill="#5a5a5a" textLength="21.6" lengthAdjust="spacingAndGlyphs">GEOREF</text></svg>
<svg class="ic" style="left:884px" width="24" height="24" viewBox="0 0 24 24"><rect x="1.2" y="1.3" width="14.8" height="9.4" fill="none" stroke="#3a3a3a" stroke-width="0.8" stroke-dasharray="1 1.1"/><ellipse cx="2.9" cy="7.5" rx="1.8" ry="1.3" fill="#f26464" stroke="#6a2a2a" stroke-width="0.5"/><ellipse cx="21.0" cy="4.4" rx="1.7" ry="1.25" fill="#e8e8e8" stroke="#5a5a5a" stroke-width="0.7"/><ellipse cx="11.9" cy="19.3" rx="1.7" ry="1.25" fill="#e8e8e8" stroke="#5a5a5a" stroke-width="0.7"/><path d="M15.5 10.7v9.6l2.3-2.1l1.9 4.3l1.7-0.8l-1.9-4.2l3.2-0.1Z" fill="#fff" stroke="#4a4a4a" stroke-width="0.7" stroke-linejoin="round"/></svg>
<svg class="ic" style="left:915px" width="24" height="24" viewBox="0 0 24 24"><rect x="1.4" y="1.3" width="14.8" height="9.4" fill="none" stroke="#3a3a3a" stroke-width="0.8" stroke-dasharray="1 1.1"/><path d="M3.5 14.1H11.1L8.6 19.6Z" fill="#c8c8c8" stroke="#3a3a3a" stroke-width="0.5"/>
<g fill="#f26a6a" stroke="#5a2020" stroke-width="0.5" stroke-linejoin="round"><path d="M3.5 13.6L9 3.1L16 13.6Z"/><path d="M12.8 3.1H22.9L19.6 11.2Z"/></g>
<path d="M6.2 8.4H12.4M6.2 8.4L9.6 13.6L12.4 8.4" stroke="#5a2020" stroke-width="0.5" fill="none"/>
<path d="M10.4 2L21.3 11.4" stroke="#f4f4f4" stroke-width="1.3"/><path d="M4.8 10.7H15.4" stroke="#fff" stroke-width="0.8" stroke-dasharray="1 1.1"/><path d="M15.8 11.2v9.6l2.3-2.1l1.9 4.3l1.7-0.8l-1.9-4.2l3.2-0.1Z" fill="#fff" stroke="#4a4a4a" stroke-width="0.7" stroke-linejoin="round"/></svg>
<svg class="ic" style="left:946px" width="24" height="24" viewBox="0 0 24 24"><rect x="1.4" y="1.3" width="15.0" height="9.4" fill="none" stroke="#3a3a3a" stroke-width="0.8" stroke-dasharray="1 1.1"/><path d="M16.9 1.4H22.8L20.7 11.2Z" fill="#c4c4c4" stroke="#3a3a3a" stroke-width="0.6"/>
<g fill="#f26a6a" stroke="#5a2020" stroke-width="0.5" stroke-linejoin="round"><path d="M2.9 13.4L11.4 1.9L16.4 13.4Z"/><path d="M3.8 13.8H13.1L8.8 19.6Z"/></g>
<path d="M6.4 8.6H14.2M6.4 8.6L9.8 13.4L14.2 8.6" stroke="#5a2020" stroke-width="0.5" fill="none"/><path d="M4.8 10.7H15.4" stroke="#fff" stroke-width="0.8" stroke-dasharray="1 1.1"/><path d="M15.6 11.2v9.6l2.3-2.1l1.9 4.3l1.7-0.8l-1.9-4.2l3.2-0.1Z" fill="#fff" stroke="#4a4a4a" stroke-width="0.7" stroke-linejoin="round"/></svg>
<svg class="ic" style="left:977px" width="24" height="24" viewBox="0 0 24 24"><circle cx="12" cy="12" r="11.3" fill="#ffff00" stroke="#000" stroke-width="1.3"/><text x="12.2" y="19.8" text-anchor="middle" font-family="Liberation Serif,serif" font-weight="bold" font-style="italic" font-size="25" fill="#000">i</text></svg>
<div class="sep" style="left:1007px"></div>
<div class="tsep" style="left:1012px"></div>
<svg style="position:absolute;left:1017px;top:0" width="4" height="37" viewBox="0 0 4 37"><path d="M0 5.4L2.4 3V5.4Z" fill="#fbfbfb"/><path d="M0.6 6.6L2.6 4.4V6.6Z" fill="#9a9a9a"/><path d="M0 9.4L2.4 7V9.4Z" fill="#fbfbfb"/><path d="M0.6 10.6L2.6 8.4V10.6Z" fill="#9a9a9a"/><path d="M0 13.4L2.4 11V13.4Z" fill="#fbfbfb"/><path d="M0.6 14.6L2.6 12.4V14.6Z" fill="#9a9a9a"/><path d="M0 17.4L2.4 15V17.4Z" fill="#fbfbfb"/><path d="M0.6 18.6L2.6 16.4V18.6Z" fill="#9a9a9a"/><path d="M0 21.4L2.4 19V21.4Z" fill="#fbfbfb"/><path d="M0.6 22.6L2.6 20.4V22.6Z" fill="#9a9a9a"/><path d="M0 25.4L2.4 23V25.4Z" fill="#fbfbfb"/><path d="M0.6 26.6L2.6 24.4V26.6Z" fill="#9a9a9a"/><path d="M0 29.4L2.4 27V29.4Z" fill="#fbfbfb"/><path d="M0.6 30.6L2.6 28.4V30.6Z" fill="#9a9a9a"/><path d="M0 33.4L2.4 31V33.4Z" fill="#fbfbfb"/><path d="M0.6 34.6L2.6 32.4V34.6Z" fill="#9a9a9a"/></svg>
<svg class="ic" style="left:1026px" width="24" height="24" viewBox="0 0 24 24"><path d="M3.1 8.9L21.1 6.1L12 21Z" fill="none" stroke="#2e2e2e" stroke-width="0.6"/><circle cx="3.1" cy="8.9" r="1.5" fill="#f26464" stroke="#6a2a2a" stroke-width="0.6"/><circle cx="21.1" cy="6.1" r="1.5" fill="#f26464" stroke="#6a2a2a" stroke-width="0.6"/><circle cx="12.0" cy="21.0" r="1.5" fill="#f26464" stroke="#6a2a2a" stroke-width="0.6"/><path d="M3.1 2.5L20.8 20.9M20.8 2.5L3.1 20.9" stroke="#ff0000" stroke-width="1.9" fill="none"/></svg>
<svg class="ic" style="left:1057px" width="24" height="24" viewBox="0 0 24 24"><path d="M4.6 8.2L21.5 4.4L13.5 19.2Z" fill="#f28484" stroke="#3a2a2a" stroke-width="0.6"/><path d="M4.6 2.3L19.8 20.0M19.8 2.3L4.6 20.0" stroke="#ff0000" stroke-width="1.9" fill="none"/></svg>
<svg class="ic" style="left:1088px" width="24" height="24" viewBox="0 0 24 24"><path d="M2.8 8.9L20.9 6.1L11.9 21Z" fill="#f28484" stroke="#3a2a2a" stroke-width="0.6"/><path d="M3.2 2.3L20.9 20.9M20.9 2.3L3.2 20.9" stroke="#ff0000" stroke-width="1.9" fill="none"/><circle cx="2.8" cy="8.9" r="1.5" fill="#fff" stroke="#2e2e2e" stroke-width="0.6"/><circle cx="20.9" cy="6.1" r="1.5" fill="#fff" stroke="#2e2e2e" stroke-width="0.6"/><circle cx="11.9" cy="21.0" r="1.5" fill="#fff" stroke="#2e2e2e" stroke-width="0.6"/></svg>
<div class="tsep" style="left:1117px"></div>
</div>
<div id="view">
  <div id="grad"></div>
  <div id="topshade"></div>
  <svg id="scene" width="1585" height="1012" viewBox="0 0 1585 1012" style="position:absolute;left:0;top:-81px">
<defs>
<linearGradient id="ga1t" gradientUnits="userSpaceOnUse" x1="566" y1="0" x2="904" y2="0"><stop offset="0" stop-color="#f2a8a8"/><stop offset="0.52" stop-color="#dc9ca6"/><stop offset="0.66" stop-color="#7c727e"/><stop offset="1" stop-color="#686876"/></linearGradient>
<linearGradient id="ga1b" gradientUnits="userSpaceOnUse" x1="573" y1="0" x2="929" y2="0"><stop offset="0" stop-color="#f2a8aa"/><stop offset="0.28" stop-color="#d89ca8"/><stop offset="0.45" stop-color="#a07c92"/><stop offset="0.62" stop-color="#626074"/><stop offset="1" stop-color="#5a5a70"/></linearGradient>
<linearGradient id="ga2" gradientUnits="userSpaceOnUse" x1="663" y1="0" x2="1046" y2="0"><stop offset="0" stop-color="#56566a"/><stop offset="0.30" stop-color="#5e5e74"/><stop offset="0.42" stop-color="#8480ae"/><stop offset="0.65" stop-color="#a6a2e4"/><stop offset="1" stop-color="#b6b2f8"/></linearGradient>
</defs>
<g shape-rendering="auto">
<path d="M566.2 482.9L568.1 474.2L570.3 465.6L572.6 457.0L575.2 448.5L577.9 440.2L580.8 431.9L583.8 423.8L587.1 415.8L590.5 407.9L594.1 400.2L597.9 392.6L601.8 385.2L605.8 377.9L610.1 370.9L614.4 364.0L619.0 357.3L623.6 350.8L628.4 344.5L633.3 338.4L638.3 332.5L643.5 326.9L648.8 321.5L654.1 316.3L659.6 311.4L665.2 306.7L670.8 302.3L676.5 298.1L682.3 294.2L688.2 290.6L694.2 287.2L700.2 284.1L706.2 281.3L712.3 278.7L718.4 276.5L724.6 274.5L730.8 272.8L737.0 271.4L743.2 270.3L749.4 269.5L755.6 269.0L761.8 268.8L768.0 268.8L774.1 269.2L780.3 269.8L786.4 270.8L792.4 272.0L798.4 273.6L804.4 275.4L810.3 277.5L816.1 279.9L821.8 282.5L827.5 285.5L833.1 288.7L838.6 292.2L843.9 296.0L849.2 300.0L854.4 304.3L859.4 308.8L864.4 313.6L869.2 318.7L873.8 324.0L878.4 329.5L882.8 335.2L887.0 341.2L891.1 347.4L895.1 353.8L898.8 360.3L902.4 367.1L905.9 374.1" fill="none" stroke="url(#ga1t)" stroke-width="1.0" stroke-linejoin="round" />
<path d="M571.0 664.0L573.6 672.7L576.5 681.2L579.5 689.5L582.8 697.7L586.4 705.6L590.1 713.3L594.0 720.8L598.1 728.1L602.5 735.1L607.0 741.9L611.6 748.4L616.5 754.6L621.5 760.6L626.7 766.3L632.1 771.7L637.6 776.7L643.2 781.5L649.0 786.0L654.9 790.1L660.9 794.0L667.0 797.5L673.3 800.6L679.6 803.5L686.0 805.9L692.5 808.1L699.1 809.9L705.7 811.3L712.4 812.4L719.1 813.2L725.9 813.6L732.7 813.6L739.5 813.3L746.3 812.6L753.1 811.6L759.9 810.2L766.7 808.5L773.5 806.4L780.2 804.0L786.9 801.3L793.6 798.2L800.1 794.8L806.6 791.0L813.1 786.9L819.4 782.5L825.7 777.8L831.8 772.8L837.8 767.5L843.8 761.9L849.5 756.0L855.2 749.8L860.7 743.3L866.1 736.6L871.3 729.7L876.4 722.5L881.2 715.0L885.9 707.3L890.5 699.5L894.8 691.4L899.0 683.1L902.9 674.6L906.7 666.0L910.2 657.2L913.5 648.2L916.7 639.1L919.5 629.9L922.2 620.5L924.7 611.1L926.9 601.6L928.8 592.0" fill="none" stroke="url(#ga1b)" stroke-width="1.0" stroke-linejoin="round" />
<path d="M667.1 362.1L670.1 356.9L673.2 351.9L676.5 346.9L679.8 342.1L683.2 337.4L686.7 332.8L690.4 328.3L694.1 324.0L697.9 319.9L701.8 315.9L705.8 312.0L709.9 308.3L714.1 304.7L718.3 301.3L722.7 298.0L727.1 294.9L731.6 291.9L736.1 289.2L740.8 286.5L745.4 284.1L750.2 281.8L755.0 279.7L759.9 277.7L764.8 275.9L769.7 274.3L774.8 272.9L779.8 271.6L784.9 270.6L790.0 269.6" fill="none" stroke="#5e5e72" stroke-width="1.0" stroke-linejoin="round" />
<path d="M790.0 269.6L796.4 268.8L802.8 268.2L809.3 267.8L815.8 267.8L822.3 268.0L828.8 268.4L835.3 269.2L841.9 270.2L848.4 271.5L854.9 273.0L861.5 274.8L867.9 276.9L874.4 279.3L880.8 281.9L887.2 284.7L893.5 287.9L899.8 291.2L906.0 294.8L912.2 298.7L918.3 302.8L924.2 307.1L930.2 311.7L936.0 316.5L941.7 321.5L947.3 326.7L952.8 332.2L958.2 337.8L963.5 343.7L968.6 349.7L973.7 356.0L978.5 362.4L983.3 369.0L987.9 375.7L992.3 382.7L996.6 389.7L1000.8 397.0L1004.7 404.3L1008.5 411.9L1012.2 419.5L1015.6 427.2L1018.9 435.1L1022.0 443.1L1024.9 451.1L1027.7 459.3L1030.2 467.5L1032.6 475.8L1034.7 484.2L1036.7 492.6L1038.5 501.0L1040.0 509.5L1041.4 518.1L1042.5 526.6L1043.5 535.2L1044.2 543.7L1044.8 552.3L1045.1 560.8L1045.2 569.3L1045.1 577.8L1044.9 586.3L1044.4 594.7L1043.7 603.0L1042.8 611.3L1041.6 619.5L1040.3 627.6L1038.8 635.6L1037.1 643.5L1035.2 651.4L1033.1 659.1L1030.7 666.7L1028.2 674.1L1025.5 681.5L1022.7 688.6L1019.6 695.7L1016.4 702.5L1012.9 709.2L1009.3 715.8L1005.6 722.1L1001.6 728.3L997.5 734.3L993.3 740.0L988.8 745.6L984.3 751.0L979.6 756.1L974.7 761.1L969.7 765.8L964.6 770.3L959.4 774.5L954.0 778.5L948.5 782.3L942.9 785.8L937.2 789.1L931.4 792.1L925.5 794.9L919.5 797.4L913.5 799.6L907.4 801.6L901.2 803.3L894.9 804.8L888.6 806.0L882.2 806.9L875.8 807.6L869.3 807.9L862.8 808.0L856.3 807.9L849.8 807.4L843.3 806.7L836.7 805.7L830.2 804.5L823.7 803.0L817.2 801.2L810.7 799.2L804.2 796.9L797.8 794.3L791.4 791.5L785.1 788.4L778.8 785.1L772.5 781.5L766.4 777.7L760.3 773.6L754.3 769.3L748.4 764.8L742.5 760.0L736.8 755.0L731.2 749.8L725.6 744.4L720.2 738.8L714.9 733.0L709.8 726.9L704.7 720.7L699.8 714.3L695.1 707.8L690.4 701.0L686.0 694.1L681.7 687.1L677.5 679.9L673.5 672.5L669.7 665.0L666.0 657.4L662.5 649.7" fill="none" stroke="url(#ga2)" stroke-width="1.0" stroke-linejoin="round" />
</g>
<g shape-rendering="crispEdges">
<polygon points="439.2,514.5 445.3,507.3 490.7,467.0 559.2,377.2 575.4,370.2 609.6,362.3 629.8,358.7 689.3,359.0 1010.5,376.4 1019.6,382.5 1037.3,442.8 1042.0,445.2 1047.5,467.6 1047.5,516.1 1046.7,518.2 1055.6,518.2 1055.1,538.9 1046.7,540.9 1041.8,541.9 999.0,571.9 979.3,570.4 976.3,569.0 970.4,576.8 958.6,576.4 951.0,587.0 951.6,588.9 751.9,648.4 748.3,649.1 720.2,642.6 711.5,643.7 703.9,653.4 694.2,662.1 682.3,662.1 672.0,659.0 662.8,658.8 651.9,662.1 646.5,673.0 640.3,681.4 613.9,686.0 463.4,634.9 458.9,623.2 426.3,611.1 423.3,608.9 420.7,581.3 440.0,576.3 442.3,577.6" fill="#848484" />
<polygon points="490.7,467.0 550.1,470.4 445.3,507.3" fill="#7e7e7e" />
<polygon points="445.3,507.3 550.1,470.4 508.5,515.8" fill="#838383" />
<polygon points="550.1,470.4 633.8,474.4 508.5,515.8" fill="#818181" />
<polygon points="508.5,515.8 633.8,474.4 589.5,525.4" fill="#777777" />
<polygon points="559.2,377.2 575.4,370.2 609.6,362.3 629.8,358.7 689.3,359.0 633.8,474.4 490.7,467.0" fill="#868686" />
<polygon points="559.2,377.2 575.4,370.2 609.6,362.3 629.8,358.7 689.3,359.0 683.9,364.8 610.4,365.6" fill="#7b7b7b" />
<polygon points="689.3,359.0 691.8,364.0 651.0,475.0 633.8,474.4" fill="#939393" />
<polygon points="633.8,474.4 651.0,475.0 603.6,528.8 589.5,525.4" fill="#959595" />
<polygon points="588.5,535.3 603.6,528.8 606.6,614.0 590.5,616.0" fill="#999999" />
<polygon points="589.5,525.4 603.6,528.8 588.5,535.3" fill="#909090" />
<polygon points="439.2,514.5 445.3,507.3 508.5,515.8 589.5,525.4 588.5,535.3 504.0,521.7" fill="#868686" />
<polygon points="439.2,514.5 504.0,521.7 588.5,535.3 590.5,616.0 442.3,577.6" fill="#898989" />
<polygon points="689.3,359.0 776.6,360.1 1010.5,376.4 1005.8,382.4 786.7,373.2 700.0,368.0" fill="#828282" />
<polygon points="1010.5,376.4 1019.6,382.5 1037.3,442.8 1042.0,445.2 1047.5,467.6 1047.5,516.1 1046.7,541.0 1041.8,541.9 1008.8,552.2 1008.8,534.0 1024.8,471.2 1019.6,446.0 1005.8,382.4" fill="#838383" />
<polygon points="663.0,474.0 808.9,464.5 1019.6,446.0 1019.6,447.6 809.3,466.4 663.0,476.6" fill="#666666" />
<polygon points="763.0,619.1 951.6,570.7 951.6,588.9 751.9,648.4 759.0,625.0" fill="#787878" />
<polygon points="426.3,611.1 458.9,623.2 463.4,634.9 613.9,686.0 611.8,655.0 579.1,660.0 423.3,608.9" fill="#7e7e7e" />
<polygon points="613.9,686.0 640.3,681.4 646.5,673.0 655.0,652.2 614.6,654.2 610.0,655.0" fill="#868686" />
<polygon points="420.7,581.3 575.3,622.2 579.1,660.0 423.3,608.9" fill="#858585" />
<polygon points="575.3,622.2 586.6,621.7 588.2,658.8 579.1,660.0" fill="#9c9c9c" />
<polygon points="586.6,621.7 613.9,617.2 614.6,654.2 588.2,658.8" fill="#8b8b8b" />
<polygon points="420.7,581.3 440.0,576.3 442.2,578.9 590.4,615.7 613.1,614.9 613.9,617.2 586.6,621.7 575.3,622.2" fill="#474747" />
<polygon points="651.0,619.0 668.2,619.0 655.0,652.2 642.0,652.2" fill="#a2a2a2" />
<polygon points="688.8,589.5 709.3,586.3 718.0,605.8 722.9,623.1 722.9,639.3 715.8,643.7 706.5,650.0 694.4,662.5 672.0,659.0 662.8,658.8 651.9,662.1 655.7,650.2 663.3,628.5 669.3,616.6 680.3,601.0" fill="#a28e8e" />
<polygon points="728.7,580.8 728.7,569.7 740.8,576.8 757.0,593.9 763.0,619.1 758.0,621.0 749.9,596.0 738.8,578.8" fill="#7a7a7a" />
<polygon points="709.6,586.9 728.7,580.8 749.9,595.0" fill="#646464" />
<polygon points="709.6,587.9 749.9,596.0 758.0,621.2 720.7,611.1" fill="#7e7e7e" />
<polygon points="720.7,611.1 758.0,621.2 751.9,648.4 722.7,639.3" fill="#868686" />
<polygon points="971.4,519.7 993.0,515.3 999.0,522.2 978.3,525.6" fill="#7c7c7c" />
<polygon points="978.3,525.6 999.0,522.2 1007.8,534.0 977.3,534.0" fill="#6a6a6a" />
<polygon points="971.4,519.7 978.3,525.6 973.3,539.4 962.5,567.0 958.6,575.9 951.7,586.7 953.6,567.0 959.6,541.4 961.5,538.4" fill="#a2a2a2" />
<polygon points="977.3,534.0 1008.8,537.4 1008.8,552.2 978.3,548.8" fill="#868686" />
<polygon points="978.3,548.8 1008.8,552.2 999.0,571.9 979.3,570.4" fill="#8b8b8b" />
<polygon points="1008.8,552.7 1041.8,541.9 999.0,571.9" fill="#727272" />
<polygon points="973.3,539.4 978.3,546.3 979.3,559.1 976.3,569.0 970.4,576.8 958.6,576.4 963.5,566.0 968.4,549.3" fill="#9c8686" />
<polygon points="963.5,566.0 968.4,560.0 973.0,566.0 970.4,576.8 958.6,576.4" fill="#7a6868" />
<polygon points="1044.8,518.2 1055.6,518.2 1055.1,538.9 1044.8,540.9" fill="#7c7c7c" />
</g>
<g shape-rendering="crispEdges">
<polygon points="688.8,592.2 700.7,594.4 710.4,605.8 714.2,620.9 711.5,639.3 703.9,653.4 694.2,662.1 682.3,662.1 672.5,656.7 667.5,648.0 669.3,635.0 669.8,616.6 680.1,601.4" fill="#8c7a7a" stroke="#3e3636" stroke-width="0.8"/>
<polygon points="669.8,616.6 676.0,607.0 682.3,622.0 679.0,646.0 672.5,652.0" fill="#a89090" stroke="#3e3636" stroke-width="0.6"/>
<polygon points="676.5,622.0 681.0,620.0 680.0,640.0 676.0,644.0" fill="#b8a0a0" stroke="#3e3636" stroke-width="0.5"/>
<path d="M692.0 649.6L688.8 592.2M692.0 649.6L700.7 594.4M692.0 649.6L710.4 605.8M692.0 649.6L714.2 620.9M692.0 649.6L711.5 639.3M692.0 649.6L703.9 653.4M692.0 649.6L694.2 662.1M692.0 649.6L682.3 662.1M692.0 649.6L672.5 656.7M692.0 649.6L667.5 648.0M692.0 649.6L669.3 635.0M692.0 649.6L669.8 616.6M692.0 649.6L680.1 601.4M692.0 649.6L688.0 600.0M692.0 649.6L697.0 602.0M692.0 649.6L704.0 612.0M692.0 649.6L706.0 624.0M692.0 649.6L703.0 638.0M692.0 649.6L698.0 648.0M692.0 649.6L690.0 654.0M692.0 649.6L684.0 650.0M692.0 649.6L682.0 640.0M692.0 649.6L682.3 622.0M692.0 649.6L684.0 608.0M688.0 600.0L697.0 602.0L704.0 612.0L706.0 624.0L703.0 638.0L698.0 648.0L690.0 654.0L684.0 650.0L682.0 640.0L682.3 622.0L684.0 608.0ZM692.0 649.6L694.0 593.5M692.0 649.6L705.5 600.0M692.0 649.6L712.5 613.0M692.0 649.6L713.0 630.0M692.0 649.6L708.0 646.0M692.0 649.6L676.0 660.0M692.0 649.6L699.0 658.0M669.8 616.6L682.3 622M676 607L688 600M680.1 601.4L684 608M672.5 656.7L684 650M667.5 648L679 646M669.3 635L682 640M672.5 652L682.3 662.1M679 646L688 662M662.8 652.3L672.5 656.7M663.3 628.5L669.3 635M655.7 650.2L669.8 616.6M660 640L672.5 656.7" stroke="#3a3232" stroke-width="0.7" fill="none"/>
<circle cx="692" cy="649.6" r="2.3" fill="#2c2626"/>
</g>
<path d="M968.0 567.5L973.3 539.4M968.0 567.5L976.0 543.0M968.0 567.5L978.3 546.3M968.0 567.5L979.0 552.0M968.0 567.5L979.3 559.1M968.0 567.5L978.0 564.0M968.0 567.5L976.3 569.0M968.0 567.5L970.4 576.8M968.0 567.5L964.0 576.5M968.0 567.5L958.6 576.4M968.0 567.5L971.0 543.0M968.0 567.5L969.5 548.0" stroke="#4a4040" stroke-width="0.6" fill="none" shape-rendering="crispEdges"/>
<circle cx="968" cy="567.5" r="1.6" fill="#3a3030"/>
<path d="M439.2 514.5L445.3 507.3M445.3 507.3L490.7 467.0M490.7 467.0L559.2 377.2M559.2 377.2L575.4 370.2M575.4 370.2L609.6 362.3M609.6 362.3L629.8 358.7M629.8 358.7L689.3 359.0M689.3 359.0L1010.5 376.4M1010.5 376.4L1019.6 382.5M1019.6 382.5L1037.3 442.8M1037.3 442.8L1042.0 445.2M1042.0 445.2L1047.5 467.6M1047.5 467.6L1047.5 516.1M1047.5 516.1L1046.7 518.2M1046.7 518.2L1055.6 518.2M1055.6 518.2L1055.1 538.9M1055.1 538.9L1046.7 540.9M1046.7 540.9L1041.8 541.9M1041.8 541.9L999.0 571.9M999.0 571.9L979.3 570.4M979.3 570.4L976.3 569.0M976.3 569.0L970.4 576.8M970.4 576.8L958.6 576.4M958.6 576.4L951.0 587.0M951.0 587.0L951.6 588.9M951.6 588.9L751.9 648.4M751.9 648.4L748.3 649.1M748.3 649.1L720.2 642.6M720.2 642.6L711.5 643.7M711.5 643.7L703.9 653.4M703.9 653.4L694.2 662.1M694.2 662.1L682.3 662.1M682.3 662.1L672.0 659.0M672.0 659.0L662.8 658.8M662.8 658.8L651.9 662.1M651.9 662.1L646.5 673.0M646.5 673.0L640.3 681.4M640.3 681.4L613.9 686.0M613.9 686.0L463.4 634.9M463.4 634.9L458.9 623.2M458.9 623.2L426.3 611.1M426.3 611.1L423.3 608.9M423.3 608.9L420.7 581.3M420.7 581.3L440.0 576.3M440.0 576.3L442.3 577.6M442.3 577.6L439.2 514.5M490.7 467.0L550.1 470.4M550.1 470.4L633.8 474.4M633.8 474.4L651.0 475.0M651.0 475.0L663.0 474.0M445.3 507.3L508.5 515.8M508.5 515.8L589.5 525.4M589.5 525.4L603.6 528.8M439.2 514.5L504.0 521.7M504.0 521.7L588.5 535.3M439.2 514.5L508.5 515.8M504.0 521.7L589.5 525.4M445.3 507.3L550.1 470.4M550.1 470.4L508.5 515.8M508.5 515.8L633.8 474.4M633.8 474.4L589.5 525.4M589.5 525.4L588.5 535.3M651.0 475.0L603.6 528.8M609.6 362.3L490.7 467.0M610.4 365.6L550.1 470.4M683.9 364.8L550.1 470.4M559.2 377.2L610.4 365.6M610.4 365.6L683.9 364.8M683.9 364.8L689.3 359.0M689.3 359.0L633.8 474.4M691.8 364.0L651.0 475.0M694.6 366.4L657.0 474.6M656.0 420.0L636.0 468.0M689.3 359.0L697.4 369.2M663.0 474.0L603.6 528.8M697.4 369.2L663.0 474.0M439.2 514.5L501.8 594.8M504.0 521.7L503.8 594.8M503.8 594.8L588.5 535.3M588.5 535.3L590.5 616.0M603.6 528.8L606.6 614.0M588.5 535.3L606.6 614.0M588.5 535.3L603.6 528.8M439.2 514.5L442.3 577.6M420.7 581.3L575.3 622.2M575.3 622.2L579.1 660.0M579.1 660.0L423.3 608.9M423.3 608.9L420.7 581.3M423.3 608.9L566.0 622.0M575.3 622.2L586.6 621.7M586.6 621.7L613.9 617.2M586.6 621.7L588.2 658.8M588.2 658.8L579.1 660.0M613.9 617.2L614.6 654.2M614.6 654.2L588.2 658.8M586.6 621.7L614.6 654.2M575.3 622.2L588.2 658.8M442.2 578.9L590.4 615.7M590.4 615.7L613.1 614.9M613.1 614.9L613.9 617.2M590.4 615.7L586.6 621.7M423.3 608.9L579.1 660.0M458.9 623.2L610.0 684.0M536.0 646.7L579.1 660.0M610.0 655.0L613.9 686.0M610.0 655.0L640.3 681.4M610.0 655.0L646.5 673.0M614.6 654.2L610.0 655.0M614.6 654.2L655.0 652.2M655.0 652.2L642.0 652.2M689.3 359.0L776.6 360.1M776.6 360.1L786.7 373.2M700.0 368.0L786.7 373.2M689.3 359.0L786.7 373.2M786.7 373.2L1005.8 382.4M1005.8 382.4L1010.5 376.4M1005.8 382.4L1019.6 446.0M1019.6 382.5L1019.6 446.0M786.7 373.2L808.9 464.5M786.7 373.2L1019.6 446.0M700.0 368.0L808.9 464.5M663.0 474.0L808.9 464.5M808.9 464.5L1019.6 446.0M1019.6 446.0L1042.0 445.2M663.0 476.6L809.3 466.4M809.3 466.4L1019.6 447.6M1019.6 446.0L1037.3 442.8M808.9 464.5L815.2 499.2M815.2 499.2L818.5 545.5M818.5 545.5L820.5 577.8M815.2 499.2L681.0 515.6M808.9 464.5L681.0 515.6M681.0 515.6L684.0 578.6M684.0 578.6L689.0 590.8M603.6 528.8L681.0 515.6M603.6 528.8L684.0 578.6M603.6 528.8L656.0 607.9M681.0 515.6L663.0 474.0M681.0 515.6L651.0 475.0M681.0 515.6L728.7 569.7M815.2 499.2L728.7 569.7M815.2 499.2L740.8 576.8M818.5 545.5L740.8 576.8M818.5 545.5L757.0 593.9M820.5 577.8L757.0 593.9M820.5 577.8L763.0 619.1M684.0 578.6L728.7 569.7M728.7 569.7L740.8 576.8M740.8 576.8L757.0 593.9M757.0 593.9L763.0 619.1M763.0 619.1L751.9 648.4M763.0 619.1L951.6 570.7M757.0 634.0L950.0 572.0M820.5 577.8L951.6 570.7M820.5 577.8L954.6 559.7M818.5 545.5L960.0 545.0M818.5 545.5L960.0 560.7M815.2 499.2L971.4 519.7M815.2 499.2L960.0 539.6M815.2 499.2L1020.0 471.0M1020.0 471.0L1024.8 471.2M684.0 578.6L656.0 607.9M656.0 607.9L606.6 614.0M656.0 607.9L651.0 619.0M651.0 619.0L668.2 619.0M668.2 619.0L655.0 652.2M651.0 619.0L642.0 652.2M656.0 607.9L668.2 619.0M606.6 614.0L651.0 619.0M613.1 614.9L656.0 607.9M689.0 590.8L668.2 619.0M684.0 578.6L656.0 607.9M709.6 584.9L728.7 580.8M728.7 580.8L749.9 595.0M749.9 595.0L758.0 621.0M720.7 611.1L758.0 621.2M709.6 586.9L749.9 596.0M758.0 621.0L751.9 648.4M689.0 590.8L708.6 586.9M1019.6 446.0L1024.8 471.2M1024.8 471.2L1047.5 467.6M1022.0 452.0L1047.5 467.6M1024.8 471.2L971.4 519.7M1024.8 471.2L993.0 515.3M1024.8 471.2L1002.4 523.2M1047.5 467.6L1002.4 523.2M1047.5 467.6L1008.8 534.0M971.4 519.7L993.0 515.3M993.0 515.3L1002.4 523.2M1002.4 523.2L1008.8 534.0M1008.8 534.0L1008.8 552.2M1008.8 552.2L1009.0 556.4M1008.8 552.2L1045.6 541.0M1008.8 534.0L1047.5 516.0M1008.8 534.0L1045.0 541.0M978.3 525.6L999.0 522.2M999.0 522.2L1007.8 534.0M977.3 534.0L1007.8 534.0M978.3 548.8L1008.8 552.2M971.4 519.7L978.3 525.6M978.3 525.6L973.3 539.4M973.3 539.4L962.5 567.0M962.5 567.0L951.7 586.7M971.4 519.7L961.5 538.4M961.5 538.4L953.6 567.0M953.6 567.0L951.0 587.0M977.3 534.0L978.3 548.8M978.3 548.8L979.3 570.4M961.5 538.4L973.3 539.4M959.6 541.4L968.0 551.0M953.6 567.0L968.4 549.3M955.0 560.0L962.5 567.0M1008.8 537.4L1041.8 541.9M1008.8 552.7L1041.8 541.9M999.0 571.9L1008.8 552.2M1008.8 534.0L1044.3 538.9M1044.8 518.2L1044.8 540.9M1044.8 518.2L1055.6 518.2M1047.0 518.2L1049.0 540.0M1049.5 518.2L1050.5 539.5M1052.5 518.2L1050.5 539.5M1046.7 518.2L1046.7 540.9" stroke="#323232" stroke-width="0.85" fill="none" stroke-opacity="1" shape-rendering="crispEdges"/>
<g shape-rendering="crispEdges" stroke="#444444" fill="none">
<polygon points="712.8,427.2 735.3,427.2 739,433.7 739.9,465.6 735.3,472.1 714.2,469.3 709.5,463.7 709.5,433.7" fill="#8f8f8f" stroke-width="1.3"/>
<polygon points="711.9,438.4 731,437 733,461 713,463.5" fill="#999999" stroke-width="0.8"/>
<path d="M712.8 427.2L711.9 438.4M735.3 427.2L731 437M712.8 427.2L725 432.8L731 437M709.5 433.7L728 431.5L735.3 427.2M731 437L739 433.7M733 461L735.3 472.1M733 461L739.9 465.6M709.5 463.7L713 463.5L735.3 472.1M711.9 440.3L735.3 470.2M712.3 443.1L730.6 466M731 437L738 449L739.9 465.6" stroke-width="0.75"/>
<polygon points="713.3,469.6 730.6,471.2 726,474.4 713.7,473" fill="#6a6a6a" stroke="none"/>
<rect x="726.6" y="474.2" width="5.6" height="27.4" fill="#8c8c8c" stroke="none"/>
<path d="M727 474V500.5M732 474.5V502" stroke-width="1.6"/>
<path d="M715.2 500.6L732.6 501.6" stroke-width="2.3"/>
</g>
<path d="M649.7 603.8L655.3 604.4L661.1 605.0L667.0 605.5L673.1 606.0L679.3 606.4L685.6 606.8L692.0 607.2L698.6 607.5L705.3 607.8L712.1 608.0L719.0 608.2L725.9 608.4L733.0 608.5L740.2 608.6L747.4 608.6L754.7 608.7L762.0 608.6L769.4 608.6L776.9 608.4L784.4 608.3L791.9 608.1L799.4 607.9L807.0 607.6L814.6 607.3L822.2 607.0L829.7 606.6L837.3 606.2L844.9 605.7L852.4 605.2L859.9 604.7L867.4 604.1L874.9 603.5L882.3 602.9L889.6 602.2L896.9 601.5L904.1 600.7L911.2 600.0L918.2 599.2L925.2 598.3L932.1 597.5L938.8 596.6L945.5 595.6L952.0 594.7L958.5 593.7L964.8 592.7L970.9 591.7L977.0 590.6L982.9 589.5L988.6 588.4L994.2 587.3L999.6 586.2L1004.9 585.0L1010.0 583.8L1015.0 582.6L1019.7 581.4L1024.3 580.2L1028.7 579.0L1032.9 577.7L1036.9 576.4L1040.8 575.2L1044.4 573.9L1047.8 572.6L1051.0 571.3L1054.0 570.0L1056.8 568.7L1059.4 567.4L1061.8 566.0L1063.9 564.7L1065.8 563.4L1067.5 562.1L1069.0 560.8L1070.3 559.5L1071.3 558.2L1072.1 556.9L1072.7 555.6L1073.0 554.3L1073.2 553.0L1073.1 551.8L1072.7 550.5L1072.1 549.3L1071.4 548.0L1070.3 546.8L1069.1 545.6L1067.6 544.5L1065.9 543.3L1064.0 542.2L1061.9 541.1L1059.5 540.0L1056.9 538.9" fill="none" stroke="#b6e8ba" stroke-width="1.15" stroke-linejoin="round" />
<path d="M1056.9 538.9L1053.5 537.6L1049.8 536.4L1045.8 535.2L1041.5 534.0L1036.8 532.9L1031.9 531.9L1026.7 530.8L1021.3 529.9L1015.5 528.9L1009.5 528.0L1003.3 527.2" fill="none" stroke="#a2a8a2" stroke-width="0.8" stroke-linejoin="round" opacity="0.75"/>
<path d="M961.6 341.6L965.4 345.9L969.1 350.3L972.8 354.8L976.3 359.4L979.8 364.1L983.3 368.9L986.6 373.8L989.9 378.8L993.1 383.8L996.2 389.0L999.2 394.2L1002.1 399.5L1005.0 404.8L1007.8 410.3L1010.4 415.8L1013.0 421.3L1015.5 427.0L1017.9 432.7L1020.2 438.4L1022.4 444.2L1024.6 450.0L1026.6 455.9L1028.5 461.9L1030.3 467.8L1032.0 473.8L1033.7 479.9L1035.2 486.0L1036.6 492.1L1037.9 498.2L1039.1 504.3L1040.2 510.5L1041.2 516.7L1042.0 522.9L1042.8 529.1L1043.5 535.3L1044.1 541.5L1044.5 547.7L1044.8 553.9L1045.1 560.1" fill="none" stroke="#b4b0f6" stroke-width="1.0" stroke-linejoin="round" />
<path d="M566.2 482.9L567.5 476.8L569.0 470.7L570.5 464.7L572.2 458.7L573.9 452.8L575.7 446.9L577.6 441.0L579.6 435.2L581.7 429.5L583.9 423.8L586.1 418.2L588.5 412.6L590.9 407.1L593.4 401.7L596.0 396.4L598.6 391.1L601.4 385.9L604.2 380.8L607.1 375.8L610.1 370.8L613.1 366.0L616.2 361.3L619.4 356.6L622.7 352.0L626.0 347.6L629.4 343.2L632.8 339.0L636.3 334.8L639.9 330.8" fill="none" stroke="#f2a8a8" stroke-width="1.0" stroke-linejoin="round" />
</svg>
  <div id="lstrip"></div>
  <div id="rstrip"></div>
  <div id="bstrip"></div>
  <div id="info"></div>
  <div class="it" style="left:158px;top:846px;letter-spacing:0.350px">FOV: 60</div>
  <div class="it" style="left:158px;top:860px;letter-spacing:0.262px">FPS:   238.1</div>
  <div class="it" style="left:158px;top:874px;letter-spacing:-0.498px">BO_RENDERING</div>
  <div class="it" style="left:792px;top:846px;letter-spacing:0.254px">Current Mesh: van_wheelless_0</div>
  <div class="it" style="left:792px;top:860px;letter-spacing:0.614px">Vertices: 767    (1,227)</div>
  <div class="it" style="left:792px;top:874px;letter-spacing:0.478px">Faces: 592    (956)</div>
  <div class="it" style="left:792px;top:888px;letter-spacing:0.492px">Selection: v: 0 f: 0</div>
  <div class="it" style="left:792px;top:902px;letter-spacing:-0.155px">VC</div>
</div>
<div id="edgeR"></div><div id="edgeB"></div>
</body>
</html>
